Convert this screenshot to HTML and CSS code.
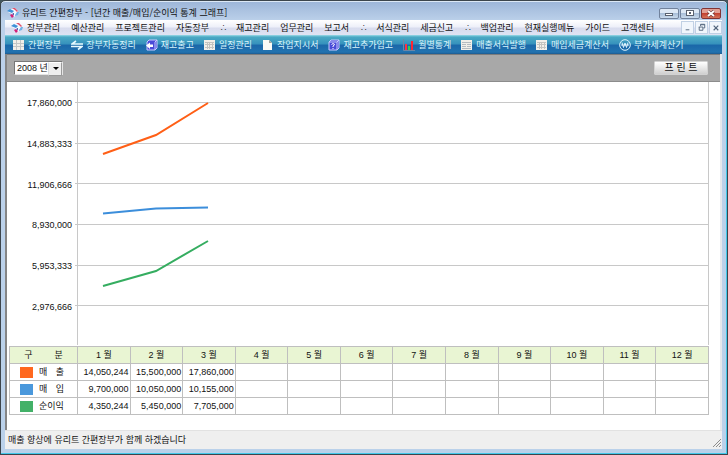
FILE: index.html
```html
<!DOCTYPE html>
<html lang="ko">
<head>
    <meta charset="UTF-8">
    <meta name="viewport" content="width=device-width, initial-scale=1.0">
    <title>유리트 간편장부</title>
    <link rel="stylesheet" href="styles.css">
</head>
<body>
    <svg class="defs" width="0" height="0">
        <symbol id="logo" viewBox="0 0 12 12">
            <path d="M1 5L4 2L8 1L11 4L11 7L7 10L5 7Z" fill="#f4f8ff" />
            <path d="M0 4L3 2L7 4L5 6Z" fill="#3f92d8" />
            <path d="M5 1L8 1L11 4L10 5L8 3Z" fill="#e0506a" />
            <path d="M10 5L12 5L11 8L8 9L8 8Z" fill="#6cb0e6" />
            <path d="M3 8L5 7L7 9L5 11Z" fill="#d21f78" />
            <path d="M5 7L7 6L7 8Z" fill="#273a94" />
        </symbol>
        <symbol id="sheet" viewBox="0 0 12 12">
            <rect x="0" y="1" width="11" height="10" fill="#f2efe9" />
            <path d="M0 4.5H11M0 7.5H11M3.5 1V11M7.5 1V11" stroke="#c3c6c6" />
        </symbol>
        <symbol id="calendar" viewBox="0 0 12 12">
            <rect x="0" y="1" width="11" height="10" fill="#f2efe9" />
            <path d="M1 3.5H10M1 5.5H10M1 8.5H10M3.5 4V10M5.5 4V10M8.5 4V10" stroke="#c3c3c0" />
        </symbol>
    </svg>

    <div class="window">
        <header class="titlebar">
            <svg class="logo"><use href="#logo" /></svg>
            <h1 class="title">유리트 간편장부 - [년간 매출/매입/순이익 통계 그래프]</h1>
            <div class="window-buttons">
                <button class="window-button" aria-label="최소화"><svg viewBox="1 1 18 9"><rect x="6.5" y="5.5" width="7" height="2" fill="#fff" stroke="#5a6270" /></svg></button>
                <button class="window-button" aria-label="최대화"><svg viewBox="1 1 18 9"><rect x="6.5" y="2.5" width="7" height="5" fill="#fff" stroke="#5a6270" /><rect x="9" y="4" width="2" height="2" fill="#5a6270" /></svg></button>
                <button class="window-button close" aria-label="닫기"><svg viewBox="1 1 18 9"><path d="M7 3L13 8M13 3L7 8" stroke="#6a3436" stroke-width="3" /><path d="M7 3L13 8M13 3L7 8" stroke="#fff" stroke-width="2" /></svg></button>
            </div>
        </header>

        <nav class="menubar">
            <svg class="logo"><use href="#logo" /></svg>
            <a href="#">장부관리</a>
            <a href="#">예산관리</a>
            <a href="#">프로젝트관리</a>
            <a href="#">자동장부</a>
            <span class="dots">∴</span>
            <a href="#">재고관리</a>
            <a href="#">업무관리</a>
            <a href="#">보고서</a>
            <span class="dots">∴</span>
            <a href="#">서식관리</a>
            <a href="#">세금신고</a>
            <span class="dots">∴</span>
            <a href="#">백업관리</a>
            <a href="#">현재실행메뉴</a>
            <a href="#">가이드</a>
            <a href="#">고객센터</a>
            <div class="child-buttons">
                <button class="child-button" aria-label="창 최소화"><svg viewBox="0 0 12 12"><path d="M4 8.5H8" stroke="#52657c" /></svg></button>
                <button class="child-button" aria-label="창 복원"><svg viewBox="0 0 12 12"><path d="M5 4.5V2.5H9.5V6.5H8M5 3H9.5M3 5.5H7.5V9H3.5V5.5" fill="none" stroke="#52657c" /></svg></button>
                <button class="child-button" aria-label="창 닫기"><svg viewBox="0 0 12 12"><path d="M4 4L9 9M9 4L4 9" stroke="#52657c" stroke-width="1.3" /></svg></button>
            </div>
        </nav>

        <div class="toolbar">
            <button class="tool"><svg><use href="#sheet" /></svg>간편장부</button>
            <button class="tool"><svg viewBox="0 0 12 12"><path d="M12 5H1L5 2M0 7.5H11L7 10.5" fill="none" stroke="#e8fbff" stroke-width="1.6" /></svg>장부자동정리</button>
            <button class="tool"><svg viewBox="0 0 12 12"><path d="M1 3L3 1H11V9L9 11H1Z" fill="#4a4bd8" stroke="#c9cbff" /><path d="M9 11V3L11 1" fill="none" stroke="#c9cbff" /><path d="M0 6.5L4 3.5V5.5H7V8H4V10Z" fill="#fff" /></svg>재고출고</button>
            <button class="tool"><svg><use href="#calendar" /></svg>일정관리</button>
            <button class="tool"><svg viewBox="0 0 12 12"><path d="M1 1H7L10 4V11H1Z" fill="#fbfbf6" /><path d="M7 1V4H10Z" fill="#a3a39c" /></svg>작업지시서</button>
            <button class="tool"><svg viewBox="0 0 12 12"><path d="M1 3L3 1H11V9L9 11H1Z" fill="#4a4bd8" stroke="#c9cbff" /><path d="M1 3H9V11M9 3L11 1" fill="none" stroke="#c9cbff" /><path d="M3.5 5.5Q5 3.7 6.5 5.3Q6.5 6.3 5 7V8M5 9V10" fill="none" stroke="#fff" /></svg>재고추가입고</button>
            <button class="tool"><svg viewBox="0 0 12 12"><path d="M.5 0V11.5H12" fill="none" stroke="#6d86a5" /><rect x="2" y="5" width="2" height="6" fill="#ff3340" /><rect x="5" y="7" width="2" height="4" fill="#35d04c" /><rect x="8" y="2" width="2" height="9" fill="#ff2533" /></svg>월별통계</button>
            <button class="tool"><svg viewBox="0 0 12 12"><rect y="1" width="11" height="10" fill="#f2efe9" /><path d="M1 3.5H10M1 5.5H5M6 5.5H10M1 7.5H5M6 7.5H10M1 9.5H10" stroke="#b5bbc0" /></svg>매출서식발행</button>
            <button class="tool"><svg><use href="#calendar" /></svg>매입세금계산서</button>
            <button class="tool"><svg viewBox="0 0 12 12"><circle cx="6" cy="6" r="5.3" fill="none" stroke="#e0f5ff" /><path d="M3 3.5L4.5 8.5L6 4L7.5 8.5L9 3.5M2 6H10" fill="none" stroke="#e0f5ff" /></svg>부가세계산기</button>
        </div>

        <main class="report">
            <div class="filter">
                <span class="year">
                    <select aria-label="연도"><option>2008 년</option></select>
                </span>
                <button class="print">프 린 트</button>
            </div>

            <div class="sheet">
                <div class="chart">
                    <ul class="scale">
                        <li>17,860,000</li>
                        <li>14,883,333</li>
                        <li>11,906,666</li>
                        <li>8,930,000</li>
                        <li>5,953,333</li>
                        <li>2,976,666</li>
                    </ul>
                    <svg class="plot" viewBox="0 0 634 264" preserveAspectRatio="none">
                        <path class="grid" d="M0 20.5H634M0 61.5H634M0 101.5H634M0 142.5H634M0 183.5H634M0 223.5H634M2.5 0V263M633.5 0V263" />
                        <polyline class="sales" points="28,72 81,53 133,21" />
                        <polyline class="purchases" points="28,131.5 81,126.5 133,125.5" />
                        <polyline class="profit" points="28,204 81,189 133,159" />
                    </svg>
                </div>

                <table class="months">
                    <thead>
                        <tr>
                            <th class="kind"><span>구</span><span>분</span></th>
                            <th>1 월</th><th>2 월</th><th>3 월</th><th>4 월</th><th>5 월</th><th>6 월</th>
                            <th>7 월</th><th>8 월</th><th>9 월</th><th>10 월</th><th>11 월</th><th>12 월</th>
                        </tr>
                    </thead>
                    <tbody>
                        <tr>
                            <th><div class="series"><i class="swatch sales"></i><b><span>매</span><span>출</span></b></div></th>
                            <td>14,050,244</td><td>15,500,000</td><td>17,860,000</td>
                            <td></td><td></td><td></td><td></td><td></td><td></td><td></td><td></td><td></td>
                        </tr>
                        <tr>
                            <th><div class="series"><i class="swatch purchases"></i><b><span>매</span><span>입</span></b></div></th>
                            <td>9,700,000</td><td>10,050,000</td><td>10,155,000</td>
                            <td></td><td></td><td></td><td></td><td></td><td></td><td></td><td></td><td></td>
                        </tr>
                        <tr>
                            <th><div class="series"><i class="swatch profit"></i><b>순이익</b></div></th>
                            <td>4,350,244</td><td>5,450,000</td><td>7,705,000</td>
                            <td></td><td></td><td></td><td></td><td></td><td></td><td></td><td></td><td></td>
                        </tr>
                    </tbody>
                </table>
            </div>
        </main>

        <footer class="status">
            <span>매출 향상에 유리트 간편장부가 함께 하겠습니다</span>
            <svg class="grip" viewBox="0 0 8 8"><path d="M0 8L8 0M3 8L8 3M6 8L8 6" stroke="#8c8c8c" /></svg>
        </footer>
    </div>
</body>
</html>
```
FILE: styles.css
```css
* {
    box-sizing: border-box;
}
body {
    margin: 0;
    background: #43565c;
    font: 9px/12px "Liberation Sans", "Noto Sans CJK KR", sans-serif;
    color: #111;
}
button, select {
    font: inherit;
    color: inherit;
    margin: 0;
    padding: 0;
    border: none;
}
svg {
    display: block;
}
.defs {
    position: absolute;
}
.logo {
    width: 12px;
    height: 12px;
    flex: none;
}

/* window frame */
.window {
    display: flex;
    flex-direction: column;
    min-height: 100vh;
    padding: 0 5px 5px 4px;
    border: 1px solid #3c454c;
    border-radius: 5px 5px 0 0;
    background: linear-gradient(#9cb5d8, #bcd1ea 20px, #bad1ea);
    box-shadow: inset 0 1px #dce8f5, inset -1px -1px #42c8ea;
}
.titlebar {
    display: flex;
    align-items: center;
    height: 19px;
    padding: 5px 1px 0 2px;
    gap: 3px;
}
.title {
    flex: 1;
    margin: 0;
    font-family: "Noto Sans CJK KR", sans-serif;
    font-size: 9px;
    font-weight: normal;
}
.window-buttons {
    display: flex;
    gap: 1px;
}
.window-button {
    width: 20px;
    height: 11px;
    border: 1px solid #71829c;
    border-radius: 2px;
    background: linear-gradient(#dde8f5 50%, #a9bfd9 50%, #c9daec);
}
.window-button svg {
    width: 18px;
    height: 9px;
}
.close {
    border-color: #823434;
    background: linear-gradient(#e2a095 45%, #c34332 50%, #d4735a);
}

/* menu */
.menubar {
    display: flex;
    align-items: center;
    gap: 11px;
    height: 15px;
    padding-left: 6px;
    background: linear-gradient(#fff, #eef0f9 45%, #d8dcee 55%, #dfe3f3);
}
.menubar .logo {
    margin-right: -7px;
}
.menubar a {
    color: inherit;
    text-decoration: none;
    white-space: nowrap;
}
.dots {
    width: 5px;
    font-size: 7px;
}
.child-buttons {
    display: flex;
    gap: 1px;
    margin-left: auto;
}
.child-button {
    width: 13px;
    height: 13px;
    border: 1px solid #c0d0e4;
    background: #f1f6fc;
}
.child-button svg {
    width: 11px;
    height: 11px;
}

/* toolbar */
.toolbar {
    display: flex;
    align-items: center;
    gap: 10px;
    height: 19px;
    padding-left: 8px;
    background: linear-gradient(#9cdbe8, #4ba9c4 2px, #3793bd 45%, #1b68a9 55%, #2273b0 90%, #1d5a90);
}
.tool {
    display: flex;
    align-items: center;
    gap: 3px;
    background: none;
    color: #d9f5fc;
    white-space: nowrap;
}
.tool svg {
    width: 12px;
    height: 12px;
}

/* report */
.report {
    flex: 1;
    display: flex;
    flex-direction: column;
    border-left: 2px solid #858585;
    border-right: 2px solid #e6e8ec;
    background: #fff;
}
.filter {
    display: flex;
    align-items: center;
    justify-content: space-between;
    height: 28px;
    padding: 0 12px 0 7px;
    border-top: 1px solid #7c7c7c;
    border-bottom: 1px solid #8c8c8c;
    background: #a8a8a8;
}
.year {
    position: relative;
}
.year select {
    display: block;
    width: 49px;
    height: 14px;
    padding-left: 2px;
    border: 1px solid #e4e4e4;
    border-top-color: #777;
    border-left-color: #777;
    background: #fff;
    appearance: none;
}
.year::before {
    content: "";
    position: absolute;
    top: 1px;
    right: 1px;
    width: 12px;
    height: 12px;
    border: 1px solid #9a9a9a;
    border-top-color: #fff;
    border-left-color: #ddd;
    background: #eee;
    pointer-events: none;
}
.year::after {
    content: "";
    position: absolute;
    top: 6px;
    right: 4px;
    border: 3px solid transparent;
    border-top-color: #000;
    border-bottom: none;
    pointer-events: none;
}
.print {
    width: 54px;
    height: 14px;
    border: 1px solid #d2d2d2;
    border-radius: 1px;
    background: linear-gradient(#fff, #e8e8e8 50%, #cfcfcf);
    font-size: 10px;
}
.sheet {
    flex: 1;
    padding: 0 11px 15px 2px;
}

/* chart */
.chart {
    display: grid;
    grid-template-columns: 66px 1fr;
    height: 264px;
}
.scale {
    display: flex;
    flex-direction: column;
    height: 245px;
    margin: 0;
    padding: 1px 3px 0 0;
    list-style: none;
}
.scale li {
    flex: 1;
    display: flex;
    align-items: center;
    justify-content: flex-end;
}
.plot {
    width: 100%;
    height: 264px;
}
.plot * {
    fill: none;
    stroke-width: 2px;
    vector-effect: non-scaling-stroke;
}
.plot .grid {
    stroke: #c8c8c8;
    stroke-width: 1px;
}
.plot .sales {
    stroke: #ff5f16;
}
.plot .purchases {
    stroke: #3c8edb;
}
.plot .profit {
    stroke: #35ad60;
}

/* monthly table */
.months {
    width: 100%;
    border-collapse: collapse;
    table-layout: fixed;
}
.months th, .months td {
    height: 17px;
    padding: 0;
    border: 1px solid #bfbfbf;
    font-weight: normal;
}
.months td {
    padding-right: 1px;
    text-align: right;
}
.months thead th {
    background: #e9f5d3;
}
.months .kind {
    width: 68px;
}
.kind span + span {
    margin-left: 22px;
}
.series {
    display: flex;
    align-items: center;
    gap: 6px;
    padding-left: 10px;
}
.series b {
    display: flex;
    justify-content: space-between;
    width: 25px;
    font-weight: normal;
}
.swatch {
    width: 13px;
    height: 11px;
}
.swatch.sales {
    background: #ff681f;
}
.swatch.purchases {
    background: #4a98dc;
}
.swatch.profit {
    background: #43b168;
}

/* status bar */
.status {
    display: flex;
    align-items: center;
    justify-content: space-between;
    height: 19px;
    padding-left: 3px;
    border-top: 1px solid #e2e2e2;
    background: #efefef;
}
.grip {
    align-self: flex-end;
    width: 8px;
    height: 8px;
    margin: 2px 1px;
}
```
